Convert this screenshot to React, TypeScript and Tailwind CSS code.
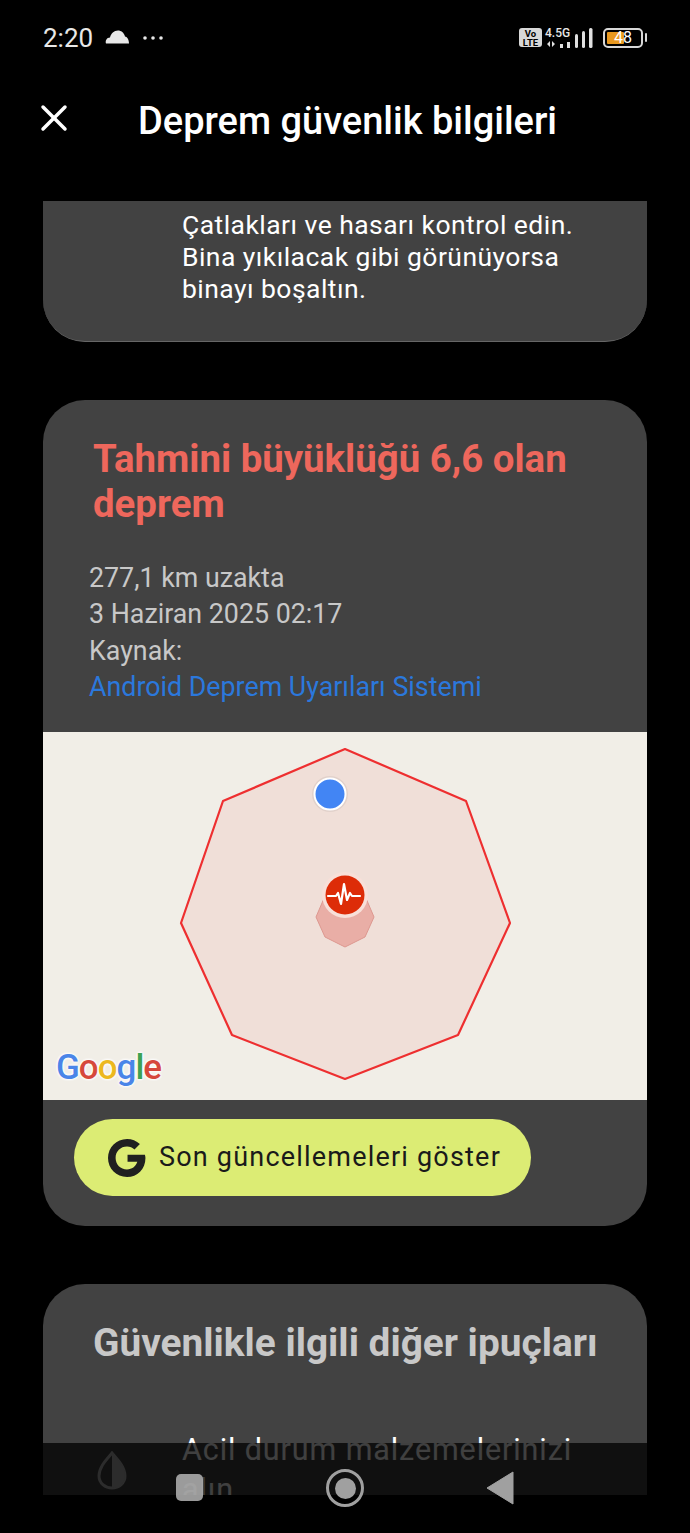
import { X } from 'lucide-react';

const sans = "font-['Roboto',sans-serif]";

function StatusBar() {
  return (
    <div className="flex h-[75px] items-center justify-between pl-[43px] pr-[43px] text-[#e8e8e8]">
      <div className="flex items-center">
        <span className={`${sans} text-[26px] leading-none`}>2:20</span>
        <svg className="ml-[12px] -mt-[2px]" width="25" height="15" viewBox="0 0 25 15">
          <path d="M1 14.500c-1-3 1-6 4-6 1-4 4-7 8-7 3 0 6 2 7 6 2 0 4 3 4 7z" fill="#e8e8e8" />
        </svg>
        <svg className="ml-[13px]" width="20" height="6" viewBox="0 0 20 6" fill="#e8e8e8">
          <circle cx="2" cy="3" r="1.8" />
          <circle cx="10" cy="3" r="1.8" />
          <circle cx="18" cy="3" r="1.8" />
        </svg>
      </div>
      <div className="flex items-center">
        <div className={`${sans} flex h-[19px] w-[23px] flex-col items-center justify-center rounded-[3px] bg-[#d8d8d8] text-[9.500px] font-bold leading-[9px] text-black`}>
          <span>Vo</span>
          <span>LTE</span>
        </div>
        <div className="ml-[3px] flex w-[29px] flex-col items-start">
          <span className={`${sans} text-[12px] font-medium leading-[11px]`}>4.5G</span>
          <svg className="mt-[1px]" width="29" height="8" viewBox="0 0 29 8" fill="#e0e0e0">
            <path d="M5 1v6L2 4zM7 1l3 3-3 3zM15 4h3v4h-3zM22 2h3v6h-3z" />
          </svg>
        </div>
        <svg width="19" height="20" viewBox="0 0 19 20" fill="#e0e0e0">
          <rect x="1" y="6" width="3" height="14" rx="1.500" />
          <rect x="8" y="3" width="3" height="17" rx="1.500" />
          <rect x="15" y="0" width="3.500" height="20" rx="1.500" />
        </svg>
        <div className="relative ml-[10px] h-[20px] w-[40px] rounded-[5px] border-2 border-[#d8d8d8] p-[2px]">
          <div className="h-full w-[17px] rounded-[1px] bg-[#e8981f]" />
          <span className={`${sans} absolute inset-0 flex items-center justify-center text-[16px] leading-none text-white`}>48</span>
        </div>
        <div className="ml-[2px] h-[9px] w-[2px] rounded-full bg-[#d8d8d8]" />
      </div>
    </div>
  );
}

function EarthquakeMap() {
  return (
    <svg className="block h-[368px] w-full" viewBox="0 0 604 368">
      <rect width="604" height="368" fill="#f1eee7" />
      <polygon
        points="302,17 423,69 467,191 415,303 302,347 189,303 138,191 180,69"
        fill="#f0dfd8"
        stroke="#ee2f30"
        strokeWidth="2.200"
        strokeLinejoin="round"
      />
      <polygon
        points="302,155 322,164 331,185 322,205 302,215 282,205 273,185 282,164"
        fill="#e9aea6"
        stroke="#dd9890"
        strokeWidth="1"
      />
      <circle cx="287" cy="62" r="18" fill="#000" opacity="0.06" />
      <circle cx="287" cy="62" r="15.500" fill="#4285f4" stroke="#fff" strokeWidth="2" />
      <circle cx="302" cy="163" r="23" fill="#f8e0d9" />
      <circle cx="302" cy="163" r="19.500" fill="#dd2c08" />
      <path
        d="M285 164h8l2-3 3 11 3-20 3 16 3-7 2 3h8"
        fill="none"
        stroke="#fff"
        strokeWidth="2.200"
        strokeLinejoin="round"
        strokeLinecap="round"
      />
    </svg>
  );
}

function GoogleMark() {
  return (
    <div className="absolute bottom-[15px] left-[13px] flex font-['Roboto',sans-serif] text-[35px] font-medium leading-none tracking-[-1px] [text-shadow:0_0_3px_#fff,0_0_3px_#fff,0_0_3px_#fff]">
      <span className="text-[#4a85e8]">G</span>
      <span className="text-[#d6483c]">o</span>
      <span className="text-[#ecb820]">o</span>
      <span className="text-[#4a85e8]">g</span>
      <span className="text-[#3ca253]">l</span>
      <span className="text-[#d6483c]">e</span>
    </div>
  );
}

export default function App() {
  return (
    <div className={`${sans} relative flex h-[1533px] w-[690px] flex-col overflow-hidden bg-black`}>
      <StatusBar />

      {/* Header */}
      <div className="flex h-[126px] items-start pl-[32px]">
        <X className="mt-[21px] h-[44px] w-[44px] text-white" strokeWidth={1.9} />
        <h1 className="ml-[62px] mt-[21px] text-[38px] font-medium leading-[50px] text-white">Deprem güvenlik bilgileri</h1>
      </div>

      <div className="flex h-[1294px] flex-col gap-[58px] overflow-hidden px-[43px]">
        {/* Tail of the previous card */}
        <div className="h-[141px] shrink-0 rounded-b-[42px] border-b border-[#666] bg-[#424242] pl-[139px] pt-[8px] text-[26.500px] leading-[32px] tracking-[0.45px] text-white">
          <p>Çatlakları ve hasarı kontrol edin.</p>
          <p>Bina yıkılacak gibi görünüyorsa</p>
          <p>binayı boşaltın.</p>
        </div>

        {/* Earthquake card */}
        <div className="h-[826px] shrink-0 overflow-hidden rounded-[42px] bg-[#424242]">
          <div className="h-[332px] pl-[50px] pt-[36px]">
            <h2 className="w-[520px] text-[38.400px] font-bold leading-[45px] text-[#ee675c]">Tahmini büyüklüğü 6,6 olan deprem</h2>
            <div className="-ml-[4px] mt-[34px] text-[26.800px] leading-[36.400px] text-[#c8c8c8]">
              <p>277,1 km uzakta</p>
              <p>3 Haziran 2025 02:17</p>
              <p>Kaynak:</p>
              <p className="text-[#2b78dc]">Android Deprem Uyarıları Sistemi</p>
            </div>
          </div>
          <div className="relative">
            <EarthquakeMap />
            <GoogleMark />
          </div>
          <div className="pl-[31px] pt-[19px]">
            <div className="flex h-[77px] w-[457px] items-center rounded-full bg-[#dcec74] pl-[34px] text-black">
              <svg width="38" height="38" viewBox="2 2.500 35 35">
                <path
                  d="M36 17H20v6.500h9c-1.500 4.500-5 7-9.500 7C13.500 30.500 9 26 9 20S13.500 9.500 19.500 9.500c2.800 0 5 1 6.900 2.700l5-5C28.200 4.200 24 2.500 19.500 2.500 9.800 2.500 2 10.300 2 20s7.800 17.500 17.500 17.500C29 37.500 36.500 30.500 36.500 20c0-1-.2-2-.5-3z"
                  fill="#202020"
                />
              </svg>
              <span className="ml-[13px] text-[27px] tracking-[1.2px] text-[#1a1a1a]">Son güncellemeleri göster</span>
            </div>
          </div>
        </div>

        {/* Next card, cut off by the scroll area */}
        <div className="h-[211px] shrink-0 overflow-hidden rounded-t-[42px] bg-[#424242] pl-[50px] pt-[36px]">
          <h2 className="text-[38.800px] font-bold leading-[45px] text-[#c8c8c8]">Güvenlikle ilgili diğer ipuçları</h2>
          <div className="ml-[89px] mt-[65px] text-[30.500px] leading-[40px] tracking-[0.9px] text-white">
            <p>Acil durum malzemelerinizi</p>
            <p>alın</p>
          </div>
        </div>
      </div>

      {/* Navigation bar over the content */}
      <div className="absolute inset-x-0 bottom-0 h-[90px] bg-black/75">
        <svg className="absolute left-[96px] top-[8px]" width="32" height="40" viewBox="0 0 32 40">
          <path d="M16 2C10 9 3 16 3 25c0 7 6 12 13 12s13-5 13-12C29 16 22 9 16 2z" fill="none" stroke="#2c2c2c" strokeWidth="3" />
          <path d="M16 2c6 7 13 14 13 23 0 7-6 12-13 12z" fill="#2c2c2c" />
        </svg>
        <div className="absolute left-[176px] top-[31px] h-[27px] w-[27px] rounded-[5px] bg-[#b4b4b4]/85" />
        <div className="absolute left-[326px] top-[26px] flex h-[38px] w-[38px] items-center justify-center rounded-full border-[3px] border-[#a0a0a0]">
          <div className="h-[21px] w-[21px] rounded-full bg-[#a0a0a0]" />
        </div>
        <svg className="absolute left-[486px] top-[28px]" width="28" height="34" viewBox="0 0 28 34">
          <path d="M27 1v32L1 17z" fill="#a0a0a0" stroke="#a0a0a0" strokeLinejoin="round" />
        </svg>
      </div>
    </div>
  );
}
